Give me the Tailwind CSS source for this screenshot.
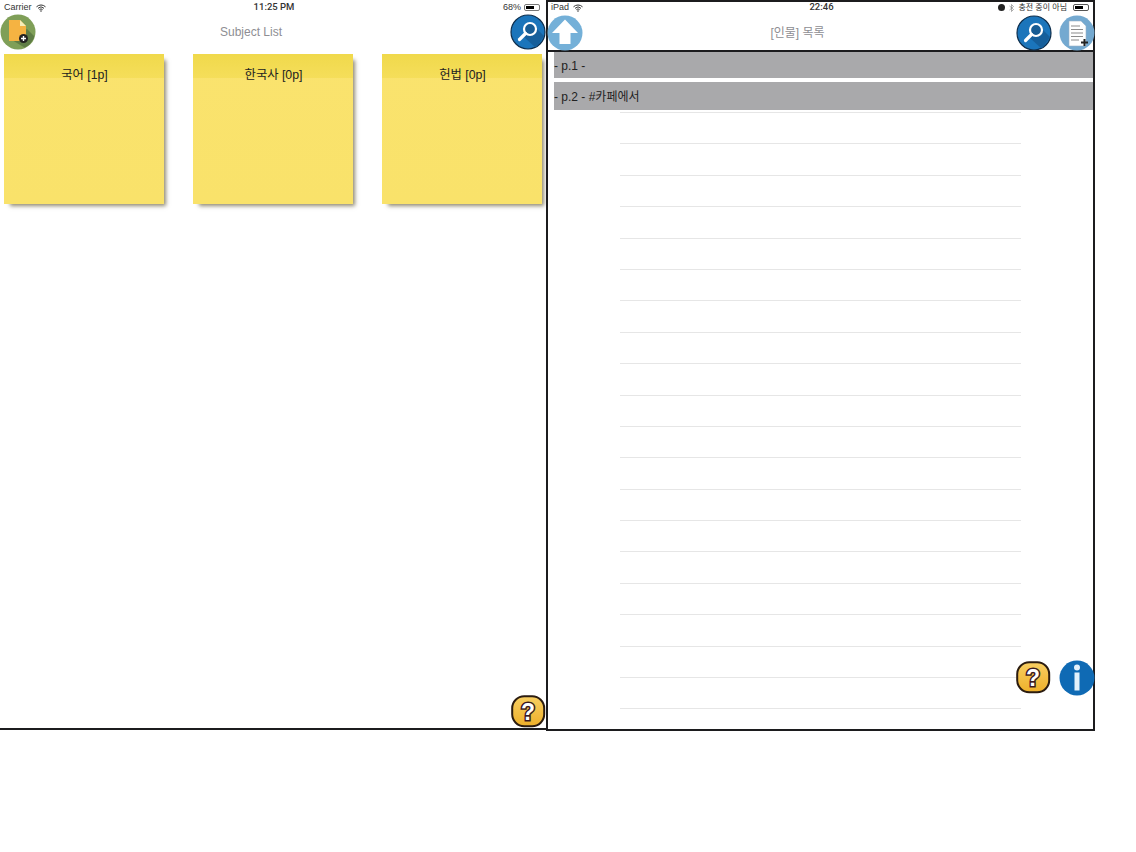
<!DOCTYPE html>
<html lang="ko">
  <head>
    <meta charset="UTF-8" />
    <script src="https://cdn.jsdelivr.net/npm/@tailwindcss/browser@4"></script>
    <title>Subject List</title>
  </head>
  <body class="w-[1136px] h-[852px] overflow-hidden bg-white font-['Liberation_Sans','Noto_Sans_CJK_KR',sans-serif]">
    <svg width="0" height="0" class="absolute">
      <defs>
        <clipPath id="disc"><circle cx="18" cy="18" r="17"/></clipPath>
        <linearGradient id="coin" x1="0" y1="0" x2="0" y2="1"><stop offset="0" stop-color="#f8cf62"/><stop offset="1" stop-color="#eeb02a"/></linearGradient>
      </defs>
    </svg>
    <div class="flex items-start">
      <!-- left: subject list -->
      <div class="relative w-[546px] h-[730px] border-b-2 border-[#1c1c1e]">
        <div class="flex items-center h-[14px] pl-[4px] pr-[5px] pt-[1px] text-[9px] text-[#333]">
          <span class="w-[60px] flex items-center gap-1">Carrier
            <svg width="10" height="8" viewBox="0 0 10 8"><path d="M0.5 2.8a6.5 6.5 0 0 1 9 0M2 4.3a4.3 4.3 0 0 1 6 0M3.4 5.7a2.2 2.2 0 0 1 3.2 0" fill="none" stroke="#333" stroke-width="1"/><circle cx="5" cy="7" r=".8" fill="#333"/></svg>
          </span>
          <span class="flex-1 text-center pl-[3px] font-['Roboto'] font-medium text-[9.5px]">11:25 PM</span>
          <span class="w-[60px] flex items-center justify-end gap-[3px] pr-[1px]">68%
            <span class="block w-[16px] h-[7px] border border-[#777] rounded-[2px] p-[1px]"><span class="block h-full w-[68%] bg-black"></span></span>
          </span>
        </div>
        <div class="flex items-center justify-between h-[36px]">
          <svg width="36" height="36" viewBox="0 0 36 36">
            <circle cx="18" cy="18" r="17.5" fill="#7f9f58"/>
            <path d="M12 26l15 9 8-12-8-8z" fill="#5f7d45" clip-path="url(#disc)"/>
            <path d="M9 6h11l6 6v15H9z" fill="#f5b342"/>
            <path d="M20 6l6 6h-6z" fill="#f7eeb8"/>
            <circle cx="23.5" cy="24.5" r="4.5" fill="#222"/>
            <path d="M21 24.5h5M23.5 22v5" stroke="#fff" stroke-width="1.4"/>
          </svg>
          <span class="text-[12px] text-[#8e8e93] pr-[44px]">Subject List</span>
          <svg width="36" height="36" viewBox="0 0 36 36">
            <circle cx="18" cy="18" r="17" fill="#1b75bb" stroke="#0e2e4c" stroke-width="1.2"/>
            <path d="M14 23l10-11 10 10-8 12z" fill="#165f9b" clip-path="url(#disc)"/>
            <circle cx="20" cy="15" r="6" fill="#175c94" stroke="#fff" stroke-width="2.2"/>
            <path d="M15.500 19.500l-6 6" stroke="#fff" stroke-width="3.200" stroke-linecap="round"/>
          </svg>
        </div>
        <div class="flex gap-[29px] pl-[4px] pt-[4px]">
          <div class="w-[160px] h-[150px] bg-linear-to-b from-[#fae36e] to-[#f9e26a] shadow-[4px_4px_4px_-2px_rgba(70,60,20,0.6)]">
            <div class="h-[24px] bg-linear-to-b from-[#f0d94b] to-[#f5de5a] flex items-start justify-center text-[12.3px] leading-[14px] text-[#222] pt-[14px] pl-[1px]">국어 [1p]</div>
          </div>
          <div class="w-[160px] h-[150px] bg-linear-to-b from-[#fae36e] to-[#f9e26a] shadow-[4px_4px_4px_-2px_rgba(70,60,20,0.6)]">
            <div class="h-[24px] bg-linear-to-b from-[#f0d94b] to-[#f5de5a] flex items-start justify-center text-[12.3px] leading-[14px] text-[#222] pt-[14px] pl-[1px]">한국사 [0p]</div>
          </div>
          <div class="w-[160px] h-[150px] bg-linear-to-b from-[#fae36e] to-[#f9e26a] shadow-[4px_4px_4px_-2px_rgba(70,60,20,0.6)]">
            <div class="h-[24px] bg-linear-to-b from-[#f0d94b] to-[#f5de5a] flex items-start justify-center text-[12.3px] leading-[14px] text-[#222] pt-[14px] pl-[1px]">헌법 [0p]</div>
          </div>
        </div>
        <svg width="36" height="34" viewBox="0 0 36 34" class="absolute right-[-1px] bottom-[-1px]">
          <rect x="1.200" y="1.200" width="32" height="30" rx="12" fill="url(#coin)" stroke="#2b1c10" stroke-width="2"/>
          <text x="17" y="24.500" text-anchor="middle" font-size="23" font-weight="700" fill="#fff" stroke="#3a1a20" stroke-width="3" paint-order="stroke" font-family="Liberation Sans">?</text>
        </svg>
      </div>
      <!-- right: page list -->
      <div class="relative w-[549px] h-[731px] border-2 border-[#1c1c1e]">
        <div class="flex items-center h-[14px] px-[3px] pb-[3px] text-[9px] text-[#333]">
          <span class="w-[140px] flex items-center gap-1">iPad
            <svg width="10" height="8" viewBox="0 0 10 8"><path d="M0.5 2.8a6.5 6.5 0 0 1 9 0M2 4.3a4.3 4.3 0 0 1 6 0M3.4 5.7a2.2 2.2 0 0 1 3.2 0" fill="none" stroke="#333" stroke-width="1"/><circle cx="5" cy="7" r=".8" fill="#333"/></svg>
          </span>
          <span class="flex-1 text-center pl-[2px] font-['Roboto'] font-medium text-[9.5px]">22:46</span>
          <span class="w-[140px] flex items-center justify-end gap-[4px] pr-[1px]">
            <span class="block w-[7px] h-[7px] rounded-full bg-[#222]"></span>
            <svg width="5" height="8" viewBox="0 0 5 8"><path d="M0.5 2l4 3.500L2.500 7.500V.5l2 2L.5 6" fill="none" stroke="#888" stroke-width=".7"/></svg>
            <span class="whitespace-nowrap text-[8px]">충전 중이 아님</span>
            <span class="block w-[16px] h-[7px] border border-[#555] rounded-[2px] p-[1px] ml-[2px]"><span class="block h-full w-[70%] bg-black"></span></span>
          </span>
        </div>
        <div class="flex items-center justify-between h-[36px] border-b-2 border-[#1c1c1e] pb-[1px]">
          <svg width="36" height="36" viewBox="0 0 36 36" class="-ml-[1px]">
            <circle cx="18" cy="18" r="17.500" fill="#74b0d8"/>
            <path d="M18 4.500L31 18h-7.500v11h-11V18H5z" fill="#fff"/>
          </svg>
          <span class="text-[12px] text-[#8e8e93] pr-[4px]">[인물] 목록</span>
          <div class="flex items-center gap-[7px] -mr-[2px]">
            <svg width="36" height="36" viewBox="0 0 36 36">
              <circle cx="18" cy="18" r="17" fill="#1b75bb" stroke="#0e2e4c" stroke-width="1.2"/>
              <path d="M14 23l10-11 10 10-8 12z" fill="#165f9b" clip-path="url(#disc)"/>
              <circle cx="20" cy="15" r="6" fill="#175c94" stroke="#fff" stroke-width="2.2"/>
              <path d="M15.500 19.500l-6 6" stroke="#fff" stroke-width="3.200" stroke-linecap="round"/>
            </svg>
            <svg width="36" height="36" viewBox="0 0 36 36">
              <circle cx="18" cy="18" r="17.500" fill="#74a9d0"/>
              <path d="M10 6h12l5 5v20H10z" fill="#fff" stroke="#9ab4c8" stroke-width=".6"/>
              <path d="M12 11h9M12 14.500h12M12 18h12M12 21.500h12M12 25h8" stroke="#8c8c8c" stroke-width="1.100"/>
              <path d="M22 27.500h7M25.500 24v7" stroke="#222" stroke-width="2"/>
            </svg>
          </div>
        </div>
        <div class="pl-[6px]">
          <div class="h-[26px] bg-[#a9a9ab] flex items-center pt-[1px] text-[12px] text-[#222]">- p.1 -</div>
          <div class="h-[28px] mt-[4px] bg-[#a9a9ab] flex items-center pt-[1px] text-[12px] text-[#222]">- p.2 - #카페에서</div>
        </div>
        <!-- ruled lines -->
        <div class="ml-[72px] w-[401px] flex flex-col">
          <div class="h-[3px] border-b border-[#e6e6e6]"></div>
          <div class="h-[31.4px] border-b border-[#e6e6e6]"></div>
          <div class="h-[31.4px] border-b border-[#e6e6e6]"></div>
          <div class="h-[31.4px] border-b border-[#e6e6e6]"></div>
          <div class="h-[31.4px] border-b border-[#e6e6e6]"></div>
          <div class="h-[31.4px] border-b border-[#e6e6e6]"></div>
          <div class="h-[31.4px] border-b border-[#e6e6e6]"></div>
          <div class="h-[31.4px] border-b border-[#e6e6e6]"></div>
          <div class="h-[31.4px] border-b border-[#e6e6e6]"></div>
          <div class="h-[31.4px] border-b border-[#e6e6e6]"></div>
          <div class="h-[31.4px] border-b border-[#e6e6e6]"></div>
          <div class="h-[31.4px] border-b border-[#e6e6e6]"></div>
          <div class="h-[31.4px] border-b border-[#e6e6e6]"></div>
          <div class="h-[31.4px] border-b border-[#e6e6e6]"></div>
          <div class="h-[31.4px] border-b border-[#e6e6e6]"></div>
          <div class="h-[31.4px] border-b border-[#e6e6e6]"></div>
          <div class="h-[31.4px] border-b border-[#e6e6e6]"></div>
          <div class="h-[31.4px] border-b border-[#e6e6e6]"></div>
          <div class="h-[31.4px] border-b border-[#e6e6e6]"></div>
          <div class="h-[31.4px] border-b border-[#e6e6e6]"></div>
        </div>
        <div class="absolute right-[-2px] bottom-[33px] flex items-center gap-[7px]">
          <svg width="36" height="34" viewBox="0 0 36 34">
            <rect x="1.200" y="1.200" width="32" height="30" rx="12" fill="url(#coin)" stroke="#2b1c10" stroke-width="2"/>
            <text x="17" y="24.500" text-anchor="middle" font-size="23" font-weight="700" fill="#fff" stroke="#3a1a20" stroke-width="3" paint-order="stroke" font-family="Liberation Sans">?</text>
          </svg>
          <svg width="36" height="36" viewBox="0 0 36 36">
            <circle cx="18" cy="18" r="17.500" fill="#0f6ab4"/>
            <circle cx="18" cy="7.500" r="3" fill="#e3f1fb"/>
            <rect x="15.500" y="12.500" width="5" height="18" fill="#e3f1fb"/>
          </svg>
        </div>
      </div>
    </div>
  </body>
</html>
